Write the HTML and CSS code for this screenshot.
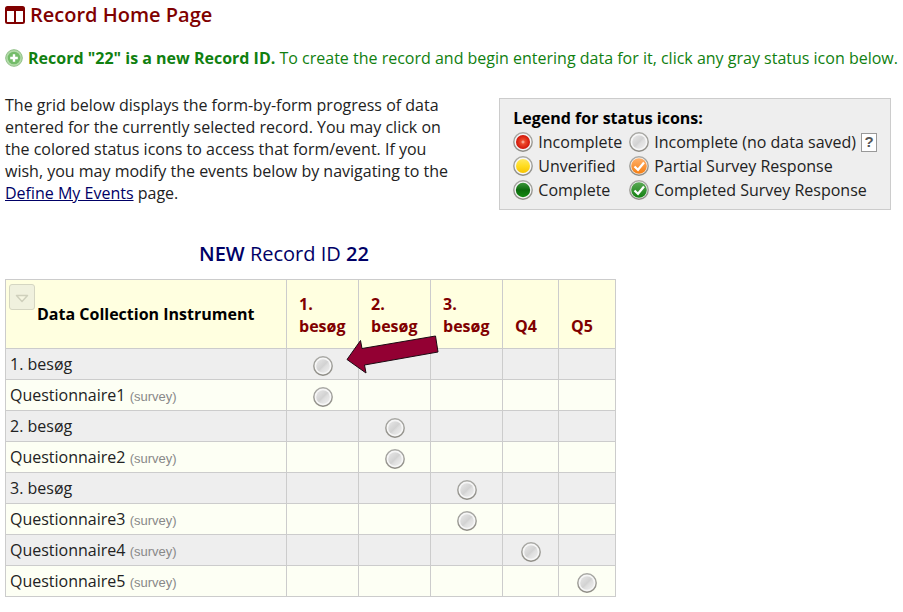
FILE: index.html
```
<!DOCTYPE html>
<html lang="en">
<head>
<meta charset="utf-8">
<title>Record Home Page</title>
<link rel="stylesheet" href="styles.css">
</head>
<body>
<svg class="defs" width="0" height="0" aria-hidden="true">
  <defs>
    <linearGradient id="ring" x1="0" y1="0" x2="0" y2="1"><stop offset="0" stop-color="#a9a9a5"/><stop offset="1" stop-color="#8f8d86"/></linearGradient>
    <linearGradient id="gray" x1="0" y1="0" x2="1" y2="1"><stop offset="0" stop-color="#e8e8e8"/><stop offset=".5" stop-color="#d2d2d2"/><stop offset=".6" stop-color="#dedede"/><stop offset="1" stop-color="#f0f0f0"/></linearGradient>
    <radialGradient id="red"><stop offset="0" stop-color="#ffd0c0"/><stop offset=".3" stop-color="#ee4a2c"/><stop offset="1" stop-color="#d01408"/></radialGradient>
    <linearGradient id="yellow" x1="0" y1="0" x2="0" y2="1"><stop offset="0" stop-color="#ffe95e"/><stop offset=".5" stop-color="#ffdc20"/><stop offset="1" stop-color="#f8c400"/></linearGradient>
    <linearGradient id="green" x1="0" y1="0" x2="0" y2="1"><stop offset="0" stop-color="#3c963a"/><stop offset=".5" stop-color="#0b6a0c"/><stop offset="1" stop-color="#128a10"/></linearGradient>
    <linearGradient id="done" x1="0" y1="0" x2="0" y2="1"><stop offset="0" stop-color="#5aa856"/><stop offset="1" stop-color="#128010"/></linearGradient>
    <linearGradient id="orange" x1="0" y1="0" x2="0" y2="1"><stop offset="0" stop-color="#ffb06a"/><stop offset="1" stop-color="#f57e12"/></linearGradient>
    <symbol id="base" viewBox="0 0 20 20"><circle cx="10" cy="10" r="9.2" fill="#f6f6f6" stroke="url(#ring)" stroke-width="1.4"/></symbol>
    <symbol id="s-gray" viewBox="0 0 20 20"><use href="#base"/><circle cx="10" cy="10" r="6.8" fill="url(#gray)"/></symbol>
    <symbol id="s-red" viewBox="0 0 20 20"><use href="#base"/><circle cx="10" cy="10" r="7" fill="url(#red)"/></symbol>
    <symbol id="s-yellow" viewBox="0 0 20 20"><use href="#base"/><circle cx="10" cy="10" r="7" fill="url(#yellow)"/></symbol>
    <symbol id="s-green" viewBox="0 0 20 20"><use href="#base"/><circle cx="10" cy="10" r="7.2" fill="url(#green)"/></symbol>
    <symbol id="s-partial" viewBox="0 0 20 20"><use href="#base"/><circle cx="10" cy="10" r="7.8" fill="url(#orange)"/><path d="M5.500 10.500l3.500 3.300 6-7.300" fill="none" stroke="#fff" stroke-width="2.200"/></symbol>
    <symbol id="s-done" viewBox="0 0 20 20"><use href="#base"/><circle cx="10" cy="10" r="7.8" fill="url(#done)"/><path d="M5.500 10.500l3.500 3.300 6-7.300" fill="none" stroke="#fff" stroke-width="2.200"/></symbol>
  </defs>
</svg>

<main class="page">
  <h1 class="title">
    <svg class="title-icon" viewBox="0 0 20 18" aria-hidden="true"><rect x="1" y="1" width="18" height="16" rx="1.5" fill="none" stroke="currentColor" stroke-width="2"/><path d="M1 1h18v4H1zM9 4h2v13H9z" fill="currentColor"/></svg>
    Record Home Page
  </h1>

  <p class="notice">
    <svg class="notice-icon" viewBox="0 0 18 18" aria-hidden="true"><circle cx="9" cy="9" r="8.3" fill="#b3dba9" stroke="#8fbf86"/><circle cx="9" cy="9" r="6.3" fill="#74bc69"/><path d="M9 5.2v7.6M5.2 9h7.6" stroke="#fff" stroke-width="2.4"/></svg>
    <span><b>Record "22" is a new Record ID.</b> To create the record and begin entering data for it, click any gray status icon below.</span>
  </p>

  <div class="intro">
    <p class="intro-text">The grid below displays the form-by-form progress of data entered for the currently selected record. You may click on the colored status icons to access that form/event. If you wish, you may modify the events below by navigating to the <a href="#events">Define My Events</a> page.</p>
    <section class="legend">
      <h2>Legend for status icons:</h2>
      <ul>
        <li><svg class="dot"><use href="#s-red"/></svg>Incomplete</li>
        <li><svg class="dot"><use href="#s-gray"/></svg>Incomplete (no data saved)<button class="help" type="button">?</button></li>
        <li><svg class="dot"><use href="#s-yellow"/></svg>Unverified</li>
        <li><svg class="dot"><use href="#s-partial"/></svg>Partial Survey Response</li>
        <li><svg class="dot"><use href="#s-green"/></svg>Complete</li>
        <li><svg class="dot"><use href="#s-done"/></svg>Completed Survey Response</li>
      </ul>
    </section>
  </div>

  <div class="grid-area">
    <h2 class="record"><b>NEW</b> Record ID <b>22</b></h2>
    <table>
      <colgroup><col class="c-name"><col class="c-visit"><col class="c-visit"><col class="c-visit"><col class="c-q"><col class="c-last"></colgroup>
      <thead>
        <tr>
          <th class="name" scope="col"><div class="name-head"><button class="toggle" type="button" aria-label="Table options"><svg viewBox="0 0 14 9" aria-hidden="true"><path d="M1.5 1.5h11L7 7.5z" fill="#f6f6e2" stroke="#cfd0bc" stroke-width="1.5" stroke-linejoin="round"/></svg></button><span>Data Collection Instrument</span></div></th>
          <th scope="col">1. besøg</th><th scope="col">2. besøg</th><th scope="col">3. besøg</th><th scope="col">Q4</th><th scope="col">Q5</th>
        </tr>
      </thead>
      <tbody>
        <tr><td>1. besøg</td><td class="first"><a href="#f1" aria-label="1. besøg"><svg class="dot"><use href="#s-gray"/></svg></a>
          <svg class="arrow" viewBox="0 0 94 42" aria-hidden="true"><path d="M1 24.500L14.500 5.500 16 13.500 89.500 1 92 17 18.500 30 20 38z" fill="#930033" stroke="#1c0a12" stroke-width="1"/></svg></td><td></td><td></td><td></td><td></td></tr>
        <tr><td>Questionnaire1 <small>(survey)</small></td><td><a href="#q1" aria-label="Questionnaire1"><svg class="dot"><use href="#s-gray"/></svg></a></td><td></td><td></td><td></td><td></td></tr>
        <tr><td>2. besøg</td><td></td><td><a href="#f2" aria-label="2. besøg"><svg class="dot"><use href="#s-gray"/></svg></a></td><td></td><td></td><td></td></tr>
        <tr><td>Questionnaire2 <small>(survey)</small></td><td></td><td><a href="#q2" aria-label="Questionnaire2"><svg class="dot"><use href="#s-gray"/></svg></a></td><td></td><td></td><td></td></tr>
        <tr><td>3. besøg</td><td></td><td></td><td><a href="#f3" aria-label="3. besøg"><svg class="dot"><use href="#s-gray"/></svg></a></td><td></td><td></td></tr>
        <tr><td>Questionnaire3 <small>(survey)</small></td><td></td><td></td><td><a href="#q3" aria-label="Questionnaire3"><svg class="dot"><use href="#s-gray"/></svg></a></td><td></td><td></td></tr>
        <tr><td>Questionnaire4 <small>(survey)</small></td><td></td><td></td><td></td><td><a href="#q4" aria-label="Questionnaire4"><svg class="dot"><use href="#s-gray"/></svg></a></td><td></td></tr>
        <tr><td>Questionnaire5 <small>(survey)</small></td><td></td><td></td><td></td><td></td><td><a href="#q5" aria-label="Questionnaire5"><svg class="dot"><use href="#s-gray"/></svg></a></td></tr>
      </tbody>
    </table>
  </div>
</main>
</body>
</html>
```
FILE: styles.css
```
* { box-sizing: border-box; }
body {
  margin: 0;
  background: #fff;
  color: #222;
  font: 16px/22px "Open Sans", "Noto Sans", sans-serif;
}
h1, h2, p, ul { margin: 0; padding: 0; }
b, th { font-weight: 700; }
.defs { position: absolute; }
.page { padding: 2px 5px 12px; }

.title {
  display: flex;
  align-items: center;
  gap: 5px;
  color: #800000;
  font-size: 20px;
  line-height: 26px;
  font-weight: 600;
}
.title-icon { width: 20px; height: 18px; }

.notice {
  display: flex;
  align-items: center;
  gap: 5px;
  margin-top: 19px;
  color: #108010;
  white-space: nowrap;
}
.notice-icon { width: 18px; height: 18px; flex: none; }

.intro {
  display: flex;
  justify-content: space-between;
  align-items: flex-start;
  gap: 32px;
  margin: 25px 7px 0 0;
}
.intro-text { max-width: 450px; }
.intro-text a { color: #000066; }
.legend {
  flex: none;
  margin-top: 4px;
  padding: 7px 13px;
  background: #eee;
  border: 1px solid #ccc;
}
.legend h2 { font-size: 16px; line-height: 24px; font-weight: 700; color: #000; }
.legend ul { display: grid; grid-template-columns: auto auto; column-gap: 7px; list-style: none; }
.legend li { display: flex; align-items: center; gap: 5px; line-height: 24px; }
.dot { display: block; width: 20px; height: 20px; flex: none; }
.help {
  width: 16px;
  height: 19px;
  padding: 0;
  border: 1px solid #999;
  background: #fff;
  color: #555;
  font: bold 15px/16px "Liberation Sans", sans-serif;
}

.grid-area { width: max-content; margin-top: 31px; }
.record {
  margin-left: 194px;
  color: #000066;
  font-size: 20px;
  line-height: 26px;
  font-weight: 400;
}
.record b { font-weight: 600; }
table {
  margin-top: 12px;
  border-collapse: collapse;
  table-layout: fixed;
  width: 611px;
}
.c-name { width: 281px; }
.c-visit { width: 72px; }
.c-q { width: 56px; }
th, td { border: 1px solid #ccc; }
th {
  height: 69px;
  padding: 11px 12px;
  background: #ffffe0;
  color: #800000;
  text-align: left;
  vertical-align: bottom;
}
th.name { padding: 4px 3px; color: #000; vertical-align: top; }
.name-head { display: flex; gap: 2px; }
.name-head span { margin-top: 19px; }
.toggle {
  display: grid;
  place-items: center;
  width: 26px;
  height: 26px;
  padding: 3px 0 0;
  border: 1px solid #d5d6c2;
  border-radius: 3px;
  background: #f0f1de;
}
.toggle svg { width: 14px; height: 9px; }
td { height: 31px; padding: 0; background: #fdfff4; }
tbody tr:nth-child(odd) td { background: #eee; }
td:first-child { padding-left: 4px; }
td .dot { margin: 3px auto 0; }
td a { display: block; }
small { color: #888; font: 13px/20px "Liberation Sans", sans-serif; }
.first { position: relative; }
.arrow { position: absolute; left: 59px; top: -14px; width: 94px; height: 42px; z-index: 1; }
```
